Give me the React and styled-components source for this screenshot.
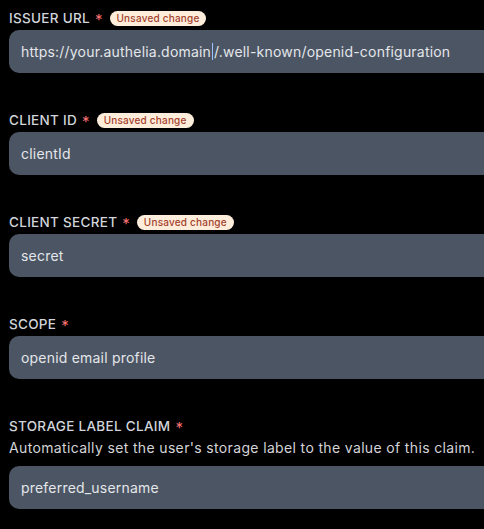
import React from "react";
import styled, { createGlobalStyle } from "styled-components";

const GlobalStyle = createGlobalStyle`
  html, body {
    margin: 0;
    padding: 0;
    background: #000;
    overflow: hidden;
  }
  body {
    font-family: Inter, "Noto Sans", sans-serif;
  }
`;

const fields = [
  {
    label: "ISSUER URL",
    value: "https://your.authelia.domain/.well-known/openid-configuration",
    caretAt: 28,
    unsaved: true,
  },
  { label: "CLIENT ID", value: "clientId", unsaved: true },
  { label: "CLIENT SECRET", value: "secret", unsaved: true },
  { label: "SCOPE", value: "openid email profile" },
  {
    label: "STORAGE LABEL CLAIM",
    value: "preferred_username",
    description:
      "Automatically set the user's storage label to the value of this claim.",
  },
];

const App = () => {
  return (
    <>
      <GlobalStyle />
      <Form>
        {fields.map((f) => (
          <Field key={f.label}>
            <LabelRow>
              <Label>{f.label}</Label>
              <Required>*</Required>
              {f.unsaved && <Badge>Unsaved change</Badge>}
            </LabelRow>
            {f.description && <Description>{f.description}</Description>}
            <Input>
              {f.caretAt ? (
                <>
                  {f.value.slice(0, f.caretAt)}
                  <Caret />
                  {f.value.slice(f.caretAt)}
                </>
              ) : (
                f.value
              )}
            </Input>
          </Field>
        ))}
      </Form>
    </>
  );
};

export default App;

const Form = styled.div`
  display: flex;
  flex-direction: column;
  gap: 37px;
  padding: 8px 0 0 9px;
  width: 620px;
`;

const Field = styled.div`
  display: flex;
  flex-direction: column;
`;

const LabelRow = styled.div`
  display: flex;
  align-items: center;
  height: 20px;
  margin-bottom: 2px;
`;

const Label = styled.span`
  color: #d1d5db;
  font-size: 13.5px;
  font-weight: 500;
  letter-spacing: 0.3px;
`;

const Required = styled.span`
  color: #f87171;
  font-size: 15px;
  margin-left: 5px;
  line-height: 1;
  position: relative;
  top: 1px;
`;

const Badge = styled.span`
  margin-left: 7px;
  background: #ffeddb;
  color: #a3412c;
  font-size: 10px;
  font-weight: 500;
  letter-spacing: 0.2px;
  border-radius: 999px;
  padding: 1px 7px;
  line-height: 13px;
`;

const Description = styled.p`
  margin: 0 0 8px;
  color: #d4d4d8;
  font-size: 14px;
  letter-spacing: 0.35px;
  line-height: 20px;
`;

const Input = styled.div`
  box-sizing: border-box;
  height: 43px;
  display: flex;
  align-items: center;
  padding: 0 12px;
  background: #4b5563;
  border-radius: 10px;
  color: #e4e6ea;
  font-size: 14px;
  letter-spacing: 0.2px;
  white-space: pre;
`;

const Caret = styled.span`
  display: inline-block;
  width: 1px;
  height: 17px;
  background: #9ec3ff;
  margin: 0 1px;
`;
